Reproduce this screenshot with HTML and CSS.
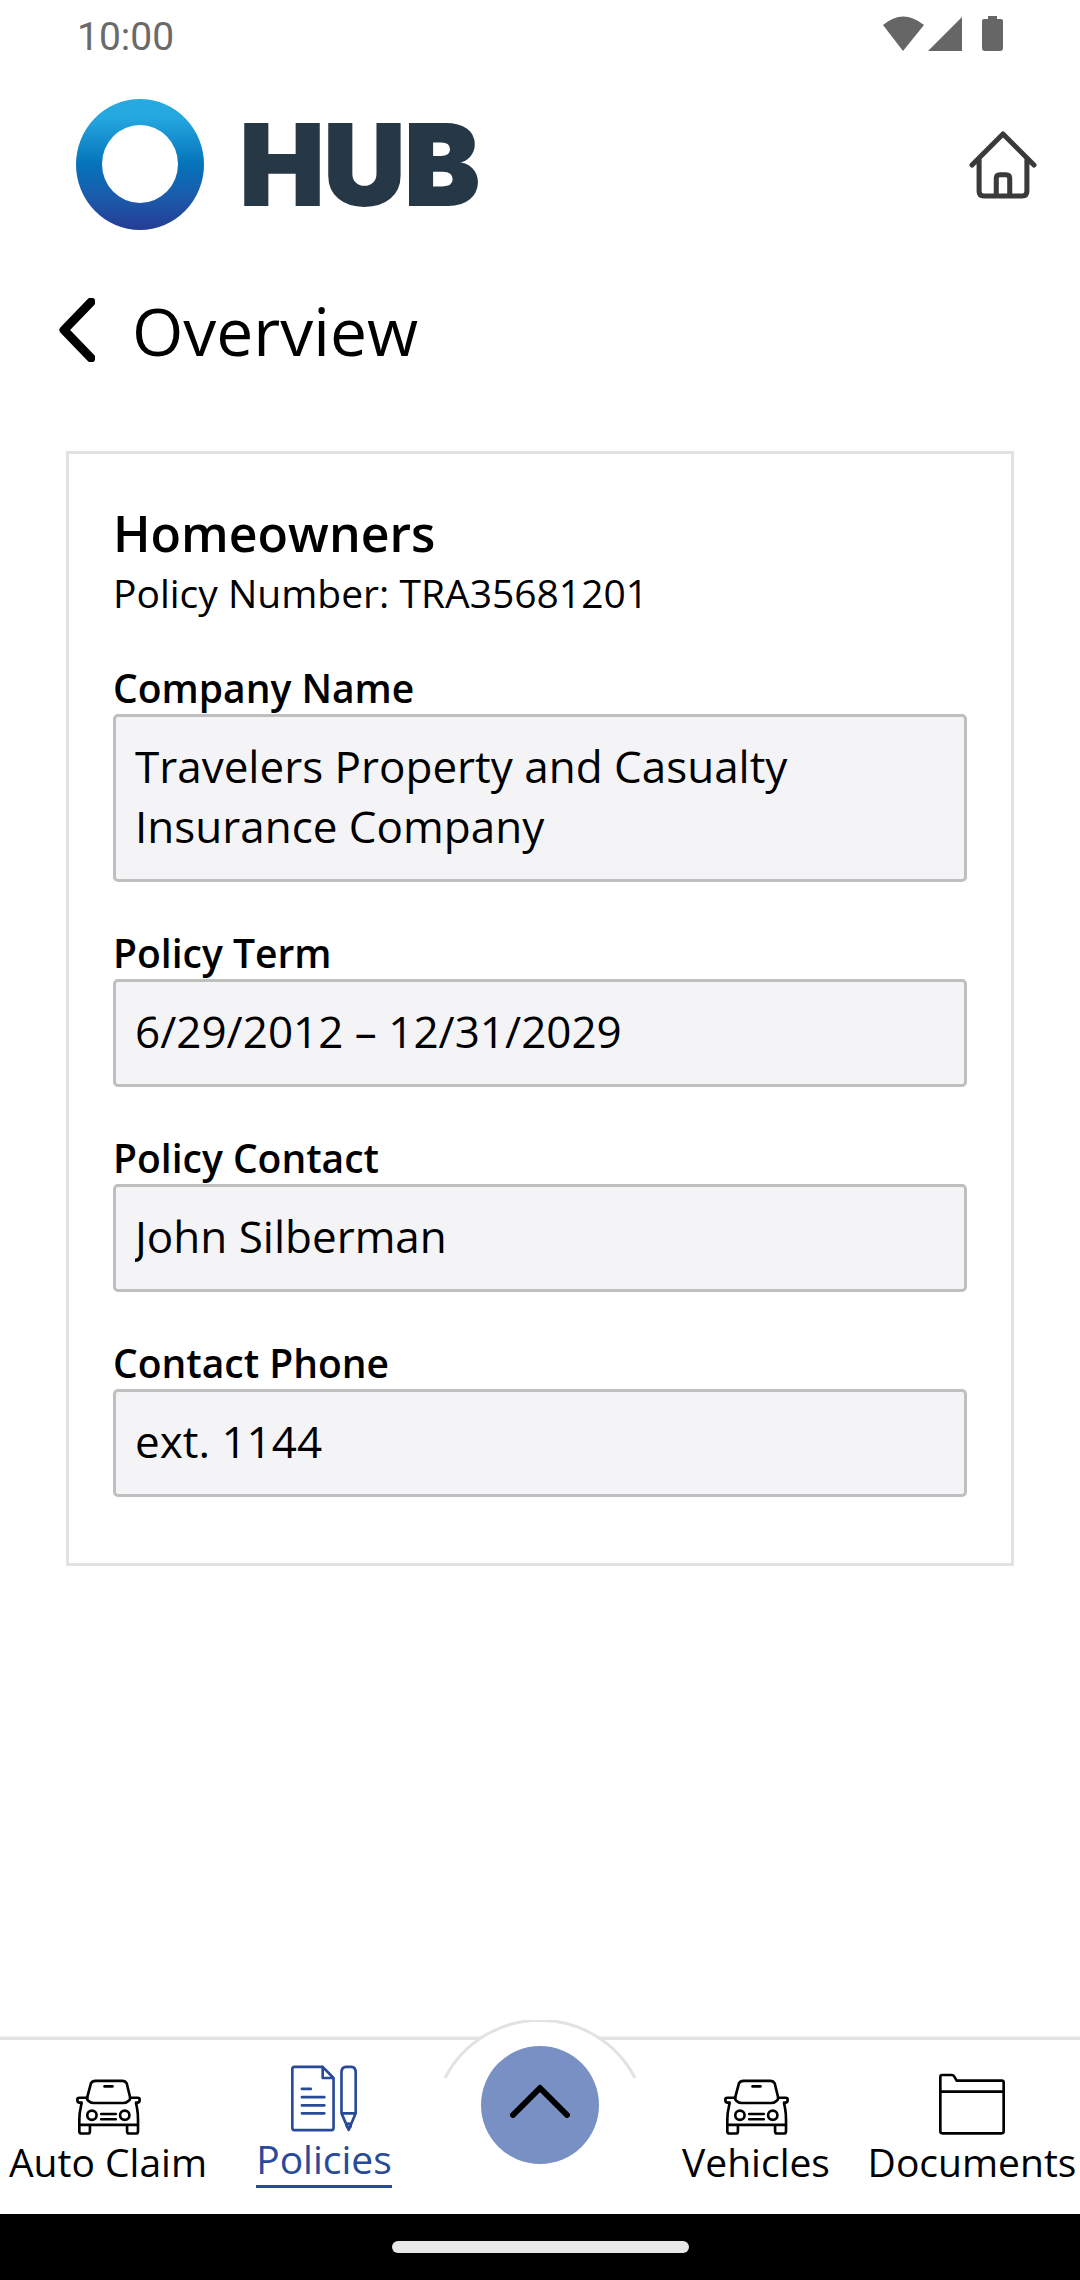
FILE: index.html
```html
<!DOCTYPE html>
<html lang="en">
<head>
<meta charset="utf-8">
<meta name="viewport" content="width=device-width, initial-scale=1">
<title>HUB – Policy Overview</title>
<link rel="stylesheet" href="styles.css">
</head>
<body>
<div class="app">
  <div class="status-bar">
    <span class="status-time">10:00</span>
    <svg class="status-icons" width="121" height="36" viewBox="0 0 121 36" aria-hidden="true">
      <path d="M0 10Q20 -7 41 10L20 36Z"/>
      <path d="M45 36L79 2V36Z"/>
      <path d="M105 1H114V4H118Q120 4 120 6V33Q120 36 117 36H102Q99 36 99 33V6Q99 4 101 4H105Z"/>
    </svg>
  </div>

  <header class="app-header">
    <a class="logo" href="#" aria-label="HUB">
      <svg width="128" height="131" viewBox="0 0 128 131" aria-hidden="true">
        <defs>
          <linearGradient id="ring" x1="0" y1="0" x2="0" y2="1">
            <stop offset="0" stop-color="#27aae1"/>
            <stop offset=".15" stop-color="#24a6df"/>
            <stop offset=".5" stop-color="#0573ba"/>
            <stop offset=".75" stop-color="#1b5bab"/>
            <stop offset="1" stop-color="#263c95"/>
          </linearGradient>
        </defs>
        <path fill="url(#ring)" fill-rule="evenodd" d="M64 0A64 65.500 0 0 1 64 131A64 65.500 0 0 1 64 0ZM64 26A38 39 0 0 0 64 104A38 39 0 0 0 64 26Z"/>
      </svg>
      <span class="logo-text">HUB</span>
    </a>
    <a class="home-link" href="#" aria-label="Home">
      <svg width="68" height="68" viewBox="0 0 202 202" aria-hidden="true">
        <path d="M9 101L101 9L193 101M30 84V179Q30 193 44 193H158Q172 193 172 179V84M81 193V141Q81 130 92 130H110Q121 130 121 141V193"/>
      </svg>
    </a>
  </header>

  <div class="title-bar">
    <button class="back-button" type="button" aria-label="Back">
      <svg width="36" height="64" viewBox="0 0 36 64" aria-hidden="true"><path d="M32 4L5 32L32 60"/></svg>
    </button>
    <h1 class="page-title">Overview</h1>
  </div>

  <main class="content">
    <section class="card">
      <h2 class="card-title">Homeowners</h2>
      <p class="card-subtitle">Policy Number: TRA35681201</p>
      <div class="fields">
        <div class="field">
          <label for="company">Company Name</label>
          <textarea id="company" rows="2" readonly>Travelers Property and Casualty Insurance Company</textarea>
        </div>
        <div class="field">
          <label for="term">Policy Term</label>
          <input id="term" type="text" value="6/29/2012 – 12/31/2029" readonly>
        </div>
        <div class="field">
          <label for="contact">Policy Contact</label>
          <input id="contact" type="text" value="John Silberman" readonly>
        </div>
        <div class="field">
          <label for="phone">Contact Phone</label>
          <input id="phone" type="text" value="ext. 1144" readonly>
        </div>
      </div>
    </section>
  </main>

  <nav class="tab-bar">
    <a class="tab" href="#">
      <svg width="65" height="56" viewBox="0 0 196 168" aria-hidden="true">
        <path d="M34 54L45 13Q49 5 59 5H139Q149 5 153 13L163 54Q165 61 159 65Q152 72 142 72H54Q44 72 37 65Q32 61 34 54Z"/>
        <path d="M34 56H10Q4 56 4 62Q4 71 11 71H17L14 87Q10 102 10 122V157Q10 164 17 164H36Q42 164 42 157V139M163 56H186Q192 56 192 62Q192 71 185 71H181L184 87Q187 102 187 122V157Q187 164 180 164H160Q154 164 154 157V139M10 138H187M86 22H110M76 105H120M76 121H120"/>
        <circle cx="48" cy="109" r="14"/><circle cx="147" cy="109" r="14"/>
      </svg>
      <span class="tab-label">Auto Claim</span>
    </a>
    <a class="tab tab-active" href="#" aria-current="page">
      <svg width="66" height="67" viewBox="0 0 200 200" aria-hidden="true">
        <path d="M96 4H10Q4 4 4 11V189Q4 196 10 196H123Q129 196 129 189V38L96 4V38H129M33 71H60M33 96H101M33 121H101M33 145H101"/>
        <path d="M153 145V22Q153 4 167 4H183Q196 4 196 22V145ZM153 145L175 195L196 145"/>
        <circle cx="175" cy="182" r="6"/>
      </svg>
      <span class="tab-label">Policies</span>
    </a>
    <div class="tab-menu">
      <svg class="tab-arc" width="196" height="59" viewBox="0 0 196 59" aria-hidden="true"><path d="M3 58A107 107 0 0 1 193 58"/></svg>
      <button class="menu-button" type="button" aria-label="Open menu">
        <svg width="62" height="34" viewBox="0 0 62 34" aria-hidden="true"><path d="M4 31L31 4L58 31"/></svg>
      </button>
    </div>
    <a class="tab" href="#">
      <svg width="65" height="56" viewBox="0 0 196 168" aria-hidden="true">
        <path d="M34 54L45 13Q49 5 59 5H139Q149 5 153 13L163 54Q165 61 159 65Q152 72 142 72H54Q44 72 37 65Q32 61 34 54Z"/>
        <path d="M34 56H10Q4 56 4 62Q4 71 11 71H17L14 87Q10 102 10 122V157Q10 164 17 164H36Q42 164 42 157V139M163 56H186Q192 56 192 62Q192 71 185 71H181L184 87Q187 102 187 122V157Q187 164 180 164H160Q154 164 154 157V139M10 138H187M86 22H110M76 105H120M76 121H120"/>
        <circle cx="48" cy="109" r="14"/><circle cx="147" cy="109" r="14"/>
      </svg>
      <span class="tab-label">Vehicles</span>
    </a>
    <a class="tab" href="#">
      <svg width="66" height="62" viewBox="0 0 198 184" aria-hidden="true">
        <path d="M53 22L46 10Q44 5 39 5H9Q4 5 4 11V174Q4 180 10 180H188Q194 180 194 174V28Q194 22 188 22ZM4 55H194"/>
      </svg>
      <span class="tab-label">Documents</span>
    </a>
  </nav>

  <div class="system-bar"><span class="system-handle"></span></div>
</div>
</body>
</html>
```

FILE: styles.css
```css
* {
  box-sizing: border-box;
}

body {
  margin: 0;
  background: #fff;
  color: #000;
  font-family: "Open Sans", "Noto Sans", sans-serif;
}

svg {
  display: block;
}

.app {
  display: flex;
  flex-direction: column;
  min-height: 100vh;
}

/* System status */
.status-bar {
  display: flex;
  justify-content: space-between;
  align-items: flex-start;
  height: 66px;
  padding: 15px 76px 0 77px;
  color: #6a6a6a;
  font-family: Roboto, sans-serif;
  font-size: 39px;
  line-height: 44px;
}

.status-icons {
  fill: #666;
}

/* Header */
.app-header {
  display: flex;
  justify-content: space-between;
  align-items: center;
  padding: 33px 43px 0 76px;
}

.logo {
  display: flex;
  align-items: center;
  gap: 36px;
  color: #263746;
  text-decoration: none;
}

.logo-text {
  font-family: Inter, sans-serif;
  font-size: 112px;
  font-weight: 900;
  line-height: 131px;
  -webkit-text-stroke: 2px #263746;
}

.home-link path {
  fill: none;
  stroke: #3a3a3a;
  stroke-width: 15;
  stroke-linecap: round;
  stroke-linejoin: round;
}

.title-bar {
  display: flex;
  align-items: center;
  gap: 37px;
  padding: 55px 59px 0;
}

.back-button {
  padding: 0;
  border: 0;
  background: none;
}

.back-button path {
  fill: none;
  stroke: #000;
  stroke-width: 9;
  stroke-linecap: round;
  stroke-linejoin: round;
}

.page-title {
  margin: 0;
  font-size: 66px;
  font-weight: 400;
  line-height: 90px;
}

/* Policy card */
.content {
  flex: 1;
  padding: 76px 66px;
}

.card {
  padding: 45px 44px 66px;
  border: 3px solid #e2e2e2;
}

.card-title {
  margin: 0;
  font-size: 50px;
  font-weight: 600;
  line-height: 68px;
}

.card-subtitle {
  margin: 0;
  font-size: 39px;
  line-height: 52px;
}

.fields {
  display: grid;
  gap: 45px;
  margin-top: 43px;
}

.field label {
  display: block;
  font-size: 39px;
  font-weight: 600;
  line-height: 52px;
}

.field input,
.field textarea {
  display: block;
  width: 100%;
  margin: 0;
  padding: 19px 19px 23px;
  border: 3px solid #bfbfbf;
  border-radius: 5px;
  outline: 0;
  background: #f4f4f7;
  color: #000;
  font-family: inherit;
  font-size: 44px;
  line-height: 60px;
  resize: none;
  overflow: hidden;
}

/* Bottom tabs */
.tab-bar {
  display: grid;
  grid-template-columns: repeat(5, minmax(0, 1fr));
  height: 177px;
  border-top: 3px solid #e2e2e2;
  box-shadow: 0 -1px 2px rgba(0, 0, 0, 0.06);
}

.tab {
  display: flex;
  flex-direction: column;
  align-items: center;
  justify-content: flex-end;
  gap: 1px;
  padding-bottom: 26px;
  color: #000;
  text-decoration: none;
}

.tab svg {
  fill: none;
  stroke: currentColor;
  stroke-width: 8;
  stroke-linecap: round;
  stroke-linejoin: round;
}

.tab-label {
  font-size: 39px;
  line-height: 52px;
  white-space: nowrap;
}

.tab-active {
  color: #294a98;
}

.tab-active .tab-label {
  border-bottom: 3px solid;
}

.tab-menu {
  position: relative;
  display: flex;
  justify-content: center;
  align-items: flex-start;
  padding-top: 6px;
}

.tab-arc {
  position: absolute;
  top: -20px;
  left: calc(50% - 98px);
  fill: #fff;
  stroke: #e2e2e2;
  stroke-width: 3;
}

.menu-button {
  position: relative;
  display: flex;
  justify-content: center;
  align-items: center;
  width: 118px;
  height: 118px;
  padding: 0 0 8px;
  border: 0;
  border-radius: 50%;
  background: #7890c3;
}

.menu-button path {
  fill: none;
  stroke: #000;
  stroke-width: 6;
  stroke-linecap: round;
  stroke-linejoin: round;
}

.system-bar {
  display: flex;
  justify-content: center;
  align-items: center;
  height: 66px;
  background: #000;
}

.system-handle {
  width: 297px;
  height: 12px;
  border-radius: 6px;
  background: #e8e8e8;
}
```
